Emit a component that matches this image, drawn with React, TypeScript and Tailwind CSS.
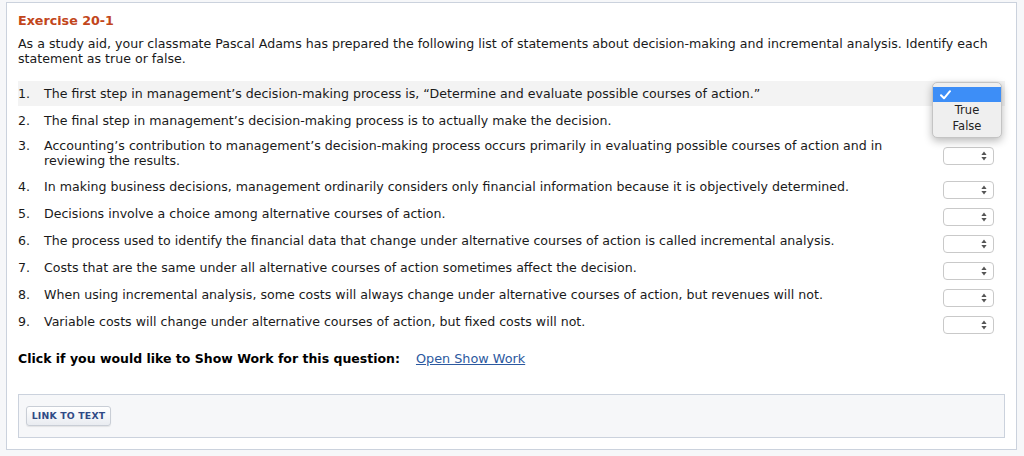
import React from "react";

const statements: string[] = [
  "The first step in management\u2019s decision-making process is, \u201cDetermine and evaluate possible courses of action.\u201d",
  "The final step in management\u2019s decision-making process is to actually make the decision.",
  "Accounting\u2019s contribution to management\u2019s decision-making process occurs primarily in evaluating possible courses of action and in reviewing the results.",
  "In making business decisions, management ordinarily considers only financial information because it is objectively determined.",
  "Decisions involve a choice among alternative courses of action.",
  "The process used to identify the financial data that change under alternative courses of action is called incremental analysis.",
  "Costs that are the same under all alternative courses of action sometimes affect the decision.",
  "When using incremental analysis, some costs will always change under alternative courses of action, but revenues will not.",
  "Variable costs will change under alternative courses of action, but fixed costs will not.",
];

function SelectBox() {
  return (
    <div className="w-[51px] h-[18px] translate-y-[3px] rounded-[4px] border border-[#c9c9c9] bg-white flex items-center justify-end pr-[6px] shrink-0">
      <svg width="6" height="10" viewBox="0 0 6 10">
        <path d="M3 0.5 L5.6 4 L0.4 4 Z" fill="#555" />
        <path d="M3 9.5 L5.6 6 L0.4 6 Z" fill="#555" />
      </svg>
    </div>
  );
}

function OpenMenu() {
  return (
    <div className="absolute left-[914px] top-[1px] w-[70px] h-[56px] rounded-[5px] bg-[#efefef] border border-[#c4c4c4] shadow-[0_3px_8px_rgba(0,0,0,0.28)] pt-[4px] z-10">
      <div className="h-[15px] bg-[#3d8ef7] flex items-center pl-[7px]">
        <svg width="11" height="10" viewBox="0 0 11 10">
          <path d="M1 5.2 L4 8.3 L10 1.2" stroke="#fff" strokeWidth="2" fill="none" strokeLinecap="round" strokeLinejoin="round" />
        </svg>
      </div>
      <div className="text-[11.5px] leading-[16px] text-[#222] text-center">True</div>
      <div className="text-[11.5px] leading-[16px] text-[#222] text-center">False</div>
    </div>
  );
}

export default function App() {
  return (
    <div
      className="w-[1024px] h-[456px] bg-[#f6f7f9] pt-[2px] pl-[6px] pr-[7px] overflow-hidden"
      style={{ fontFamily: "'DejaVu Sans', Verdana, sans-serif" }}
    >
      <div className="h-[448px] bg-white border border-[#cbd2dd] px-[11px] pt-[9px] text-[#1a1a1a]">
        <h2 className="text-[12.7px] leading-[18px] font-bold text-[#c2461b]">Exercise 20-1</h2>
        <p className="mt-[6px] text-[12.6px] leading-[15px]">
          As a study aid, your classmate Pascal Adams has prepared the following list of statements about decision-making and incremental analysis. Identify each statement as true or false.
        </p>

        <div className="relative mt-[15px] flex flex-col gap-[2px]">
          {statements.map((s, i) => (
            <div
              key={i}
              className={`flex items-center ${i === 2 ? "pt-[3px] pb-[4px]" : "py-[5px]"} ${i === 0 ? "bg-[#f3f3f3]" : ""}`}
            >
              <div className="flex-1 flex text-[12.6px] leading-[15px]">
                <div className="w-[26px] shrink-0">{i + 1}.</div>
                <div className="flex-1 pr-[30px]">{s}</div>
              </div>
              <div className="mr-[11px] h-[15px] flex items-center">
                {i > 1 ? <SelectBox /> : <div className="w-[51px]" />}
              </div>
            </div>
          ))}
          <OpenMenu />
        </div>

        <div className="mt-[17px] flex items-center text-[12.5px] leading-[15px]">
          <span className="font-bold text-black">Click if you would like to Show Work for this question:</span>
          <a href="#" className="ml-[16px] text-[12.8px] text-[#2c59a0] underline">Open Show Work</a>
        </div>

        <div className="mt-[28px] h-[44px] bg-[#f6f7f9] border border-[#cbd2dd] pl-[7px] pt-[7px]">
          <button className="h-[20px] w-[85px] rounded-[3px] border border-[#c9ced6] bg-gradient-to-b from-white to-[#e9ecf1] shadow-[0_1px_1px_rgba(0,0,0,0.08)] text-[9.3px] font-bold text-[#2f4a86] tracking-[0.2px]">
            LINK TO TEXT
          </button>
        </div>
      </div>
    </div>
  );
}
